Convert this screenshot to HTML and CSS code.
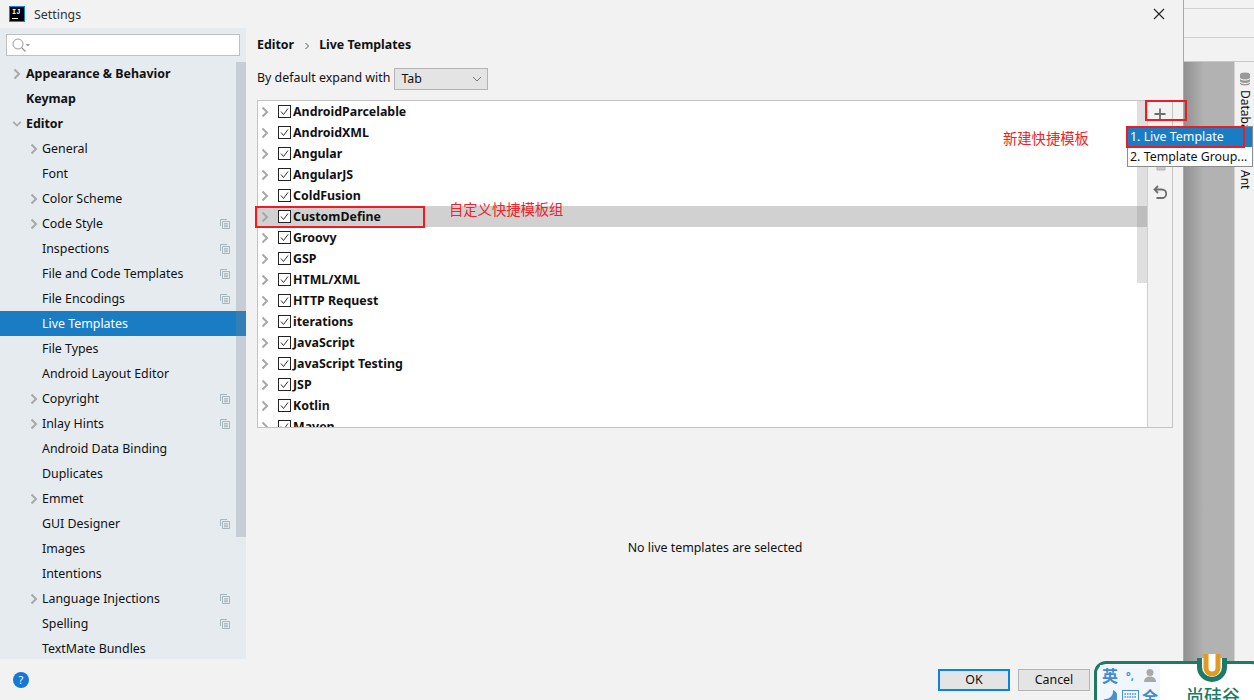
FILE: index.html
```html
<!DOCTYPE html>
<html lang="en">
<head>
<meta charset="utf-8">
<title>Settings</title>
<link rel="stylesheet" href="styles.css">
</head>
<body>
<svg class="defs" width="0" height="0" aria-hidden="true">
  <symbol id="right" viewBox="0 0 10 12"><path d="M2.5 1.500 7 6 2.500 10.500" fill="none" stroke="#a8a8a8" stroke-width="2"/></symbol>
  <symbol id="down" viewBox="0 0 12 10"><path d="M1.500 2.500 6 7l4.500-4.500" fill="none" stroke="#a8a8a8" stroke-width="2"/></symbol>
  <symbol id="copy" viewBox="0 0 10 10"><path d="M.5 7V.5H7M2.500 9.500v-7h7v7zM4 4.700h4M4 6.200h4M4 7.700h4" fill="none" stroke="#a9b5bd" stroke-width="1"/></symbol>
  <symbol id="box" viewBox="0 0 13 13"><rect x=".5" y=".5" width="12" height="12" fill="#fff" stroke="#222"/><path d="M3 6.500 5.500 9.500 10 3.500" fill="none" stroke="#333" stroke-width="1"/></symbol>
</svg>
<div class="screen">
  <div class="dialog">
    <header class="titlebar">
      <span class="app-logo"><span class="app-logo-text">IJ</span><span class="app-logo-bar"></span></span>
      <span class="title">Settings</span>
      <svg class="close" width="12" height="12" viewBox="0 0 12 12"><path d="M1 1l10 10M11 1 1 11" stroke="#222" stroke-width="1.100" fill="none"/></svg>
    </header>
    <div class="body">
      <aside class="sidebar">
        <div class="search">
          <svg width="20" height="15" viewBox="0 0 20 15"><circle cx="6" cy="6" r="5" fill="none" stroke="#9a9a9a"/><path d="M9.500 9.500l4 4" stroke="#9a9a9a" stroke-width="1.200"/><path d="M13.500 6h4.500l-2.200 2.500z" fill="#9a9a9a"/></svg>
        </div>
        <div class="tree">
          <div class="sb-thumb"></div>
          <div class="node top"><svg class="chev"><use href="#right"/></svg><b>Appearance &amp; Behavior</b></div>
          <div class="node top"><b>Keymap</b></div>
          <div class="node top"><svg class="chev"><use href="#down"/></svg><b>Editor</b></div>
          <div class="node"><svg class="chev"><use href="#right"/></svg>General</div>
          <div class="node">Font</div>
          <div class="node"><svg class="chev"><use href="#right"/></svg>Color Scheme</div>
          <div class="node"><svg class="chev"><use href="#right"/></svg>Code Style<svg class="copy"><use href="#copy"/></svg></div>
          <div class="node">Inspections<svg class="copy"><use href="#copy"/></svg></div>
          <div class="node">File and Code Templates<svg class="copy"><use href="#copy"/></svg></div>
          <div class="node">File Encodings<svg class="copy"><use href="#copy"/></svg></div>
          <div class="node selected">Live Templates</div>
          <div class="node">File Types</div>
          <div class="node">Android Layout Editor</div>
          <div class="node"><svg class="chev"><use href="#right"/></svg>Copyright<svg class="copy"><use href="#copy"/></svg></div>
          <div class="node"><svg class="chev"><use href="#right"/></svg>Inlay Hints<svg class="copy"><use href="#copy"/></svg></div>
          <div class="node">Android Data Binding</div>
          <div class="node">Duplicates</div>
          <div class="node"><svg class="chev"><use href="#right"/></svg>Emmet</div>
          <div class="node">GUI Designer<svg class="copy"><use href="#copy"/></svg></div>
          <div class="node">Images</div>
          <div class="node">Intentions</div>
          <div class="node"><svg class="chev"><use href="#right"/></svg>Language Injections<svg class="copy"><use href="#copy"/></svg></div>
          <div class="node">Spelling<svg class="copy"><use href="#copy"/></svg></div>
          <div class="node">TextMate Bundles</div>
        </div>
      </aside>
      <main class="main">
        <div class="crumbs"><b>Editor</b><svg class="crumb-sep" width="6" height="8" viewBox="0 0 6 8"><path d="M1.500 1 4.500 4 1.500 7" fill="none" stroke="#555"/></svg><b>Live Templates</b></div>
        <div class="expand">
          <span>By default expand with</span>
          <span class="combo"><span>Tab</span><svg width="10" height="6" viewBox="0 0 10 6"><path d="M1 1l4 4 4-4" fill="none" stroke="#777"/></svg></span>
        </div>
        <div class="panel">
          <div class="list">
            <div class="list-thumb"></div>
            <div class="row"><svg class="row-chev"><use href="#right"/></svg><svg class="check"><use href="#box"/></svg><b>AndroidParcelable</b></div>
            <div class="row"><svg class="row-chev"><use href="#right"/></svg><svg class="check"><use href="#box"/></svg><b>AndroidXML</b></div>
            <div class="row"><svg class="row-chev"><use href="#right"/></svg><svg class="check"><use href="#box"/></svg><b>Angular</b></div>
            <div class="row"><svg class="row-chev"><use href="#right"/></svg><svg class="check"><use href="#box"/></svg><b>AngularJS</b></div>
            <div class="row"><svg class="row-chev"><use href="#right"/></svg><svg class="check"><use href="#box"/></svg><b>ColdFusion</b></div>
            <div class="row current"><svg class="row-chev"><use href="#right"/></svg><svg class="check"><use href="#box"/></svg><b>CustomDefine</b></div>
            <div class="row"><svg class="row-chev"><use href="#right"/></svg><svg class="check"><use href="#box"/></svg><b>Groovy</b></div>
            <div class="row"><svg class="row-chev"><use href="#right"/></svg><svg class="check"><use href="#box"/></svg><b>GSP</b></div>
            <div class="row"><svg class="row-chev"><use href="#right"/></svg><svg class="check"><use href="#box"/></svg><b>HTML/XML</b></div>
            <div class="row"><svg class="row-chev"><use href="#right"/></svg><svg class="check"><use href="#box"/></svg><b>HTTP Request</b></div>
            <div class="row"><svg class="row-chev"><use href="#right"/></svg><svg class="check"><use href="#box"/></svg><b>iterations</b></div>
            <div class="row"><svg class="row-chev"><use href="#right"/></svg><svg class="check"><use href="#box"/></svg><b>JavaScript</b></div>
            <div class="row"><svg class="row-chev"><use href="#right"/></svg><svg class="check"><use href="#box"/></svg><b>JavaScript Testing</b></div>
            <div class="row"><svg class="row-chev"><use href="#right"/></svg><svg class="check"><use href="#box"/></svg><b>JSP</b></div>
            <div class="row"><svg class="row-chev"><use href="#right"/></svg><svg class="check"><use href="#box"/></svg><b>Kotlin</b></div>
            <div class="row"><svg class="row-chev"><use href="#right"/></svg><svg class="check"><use href="#box"/></svg><b>Maven</b></div>
          </div>
          <div class="tools">
            <svg class="tool" viewBox="0 0 12 12"><path d="M6 .5v11M.5 6h11" stroke="#6e6e6e" stroke-width="1.800" fill="none"/></svg>
            <svg class="tool" viewBox="0 0 12 12"><path d="M.5 6h11" stroke="#a8a8a8" stroke-width="1.600" fill="none"/></svg>
            <svg class="tool" viewBox="0 0 12 12"><path d="M3 1h8v9H3z" fill="#c8c8c8" stroke="#b4b4b4"/></svg>
            <svg class="tool tool-undo" viewBox="0 0 14 14"><path d="M5 1 1.500 4.500 5 8M2 4.500h7a3.800 3.800 0 0 1 0 8.500H3.500" fill="none" stroke="#6e6e6e" stroke-width="1.800"/></svg>
          </div>
        </div>
        <div class="empty">No live templates are selected</div>
      </main>
    </div>
    <footer class="footer">
      <span class="help">?</span>
      <span class="btn default">OK</span>
      <span class="btn">Cancel</span>
    </footer>
  </div>
  <div class="backdrop">
    <div class="back-top"><div class="back-line"></div><div class="back-line"></div></div>
    <div class="back-main">
      <div class="shade"></div>
      <div class="tool-strip">
        <svg class="db-icon" width="12" height="14" viewBox="0 0 12 14"><ellipse cx="6" cy="2.500" rx="5" ry="2" fill="#999"/><path d="M1 3v8.500c0 1 2.200 2 5 2s5-1 5-2V3" fill="#999"/><path d="M1 6.500c1 1 3 1.500 5 1.500s4-.5 5-1.500M1 10c1 1 3 1.500 5 1.500s4-.5 5-1.500" stroke="#fff" fill="none"/></svg>
        <span class="strip-text">Database</span>
        <span class="strip-text ant">Ant</span>
      </div>
    </div>
  </div>
</div>

<div class="popup">
  <div class="popup-item active">1. Live Template</div>
  <div class="popup-item">2. Template Group...</div>
</div>

<div class="mark mark-plus"></div>
<div class="mark mark-item"></div>
<div class="mark mark-row"></div>
<div class="note note-new">新建快捷模板</div>
<div class="note note-group">自定义快捷模板组</div>

<div class="ime">
  <div class="ime-keys">
    <span>英</span><span class="ime-punct">°,</span>
    <svg width="14" height="16" viewBox="0 0 14 16"><circle cx="7" cy="4.500" r="3.500" fill="#a9a9a9"/><path d="M1 14c0-4 3-5.500 6-5.500s6 1.500 6 5.500z" fill="#a9a9a9"/></svg>
    <svg width="14" height="16" viewBox="0 0 14 16"><path d="M10 1a7 7 0 1 1-9 9A8 8 0 0 0 10 1z" fill="#4a90d0"/></svg>
    <svg width="17" height="14" viewBox="0 0 17 14"><rect x=".5" y=".5" width="16" height="13" fill="none" stroke="#4a90d0"/><path d="M2.500 4h12M2.500 7h12M4 10.500h9" stroke="#4a90d0" stroke-width="1.500" stroke-dasharray="1.500 1"/></svg>
    <span>全</span>
  </div>
  <div class="brand">
    <span class="brand-name">尚硅谷</span>
  </div>
</div>
<svg class="brand-logo" width="32" height="34" viewBox="0 0 32 34">
  <path d="M3.500 6v9a12.500 12.500 0 0 0 25 0V6" fill="#fff" stroke="#1c7a66" stroke-width="5"/>
  <path d="M10 2v14a6 6 0 0 0 12 0V2" fill="#fff" stroke="#e39a20" stroke-width="5"/>
</svg>
</body>
</html>
```
FILE: styles.css
```css
* { box-sizing: border-box; }
html, body { margin: 0; height: 700px; overflow: hidden; }
body { font: 12.4px/1 "Noto Sans", "Noto Sans CJK SC", sans-serif; color: #111; background: #f2f2f2; }
.defs { position: absolute; }
b { font-weight: 700; }

.screen { display: flex; width: 1254px; height: 700px; }
.dialog { width: 1184px; height: 700px; display: flex; flex-direction: column; background: #f2f2f2; border-right: 1px solid #a8a8a8; position: relative; z-index: 1; }

.titlebar { height: 28px; flex: none; display: flex; align-items: center; padding: 0 18px 0 9px; }
.app-logo { width: 16px; height: 16px; background: #000; border: 1px solid #1c7fd8; color: #fff; display: flex; flex-direction: column; padding: 1px 2px; }
.app-logo-text { font: 700 7px/8px "Liberation Mono", monospace; }
.app-logo-bar { width: 6px; height: 1px; background: #fff; margin-top: 2px; }
.title { margin-left: 9px; color: #333; font-size: 12.4px; padding-top: 2px; }
.close { margin-left: auto; }

.body { flex: 1; display: flex; min-height: 0; }
.sidebar { width: 246px; flex: none; background: #e6ebf0; display: flex; flex-direction: column; }
.search { height: 22px; margin: 6px 6px 0; background: #fff; border: 1px solid #c0c0c0; display: flex; align-items: center; padding-left: 5px; flex: none; }
.tree { flex: 1; position: relative; overflow: hidden; margin-top: 5px; }
.sb-thumb { position: absolute; top: 1px; right: 0; width: 10px; height: 475px; background: rgba(120,130,140,.28); z-index: 2; }
.node { height: 25px; display: flex; align-items: center; padding: 2px 0 0 42px; position: relative; white-space: nowrap; }
.node.top { padding-left: 26px; }
.node.selected { background: #1a7dc4; color: #fff; }
.chev { position: absolute; left: 29px; top: 7px; width: 10px; height: 12px; }
.top .chev { left: 12px; }
.copy { position: absolute; left: 220px; top: 8px; width: 10px; height: 10px; }

.main { flex: 1; display: flex; flex-direction: column; padding: 0 10px 0 11px; min-width: 0; }
.crumbs { height: 33px; flex: none; display: flex; align-items: center; padding-top: 2px; }
.crumb-sep { margin: 0 9px 0 10px; }
.expand { flex: none; display: flex; align-items: center; gap: 4px; height: 23px; margin-top: 6px; }
.combo { width: 94px; height: 22px; background: #e4e4e4; border: 1px solid #b4b4b4; display: flex; align-items: center; justify-content: space-between; padding: 1px 5px 0 6px; }
.panel { margin-top: 10px; height: 328px; flex: none; display: flex; background: #fff; border: 1px solid #c4c4c4; }
.list { flex: 1; position: relative; overflow: hidden; min-width: 0; }
.list-thumb { position: absolute; top: 0; right: 0; width: 10px; height: 182px; background: rgba(130,130,130,.26); z-index: 2; }
.row { height: 21px; display: flex; align-items: center; padding: 2px 0 0 2px; }
.row.current { background: #d1d1d1; }
.row-chev { width: 10px; height: 12px; flex: none; margin-top: -2px; }
.check { width: 13px; height: 13px; flex: none; margin: -2px 2px 0 8px; }
.tools { width: 25px; flex: none; border-left: 1px solid #d0d0d0; background: #f2f2f2; display: flex; flex-direction: column; align-items: center; padding-top: 7px; gap: 14px; }
.tool { width: 12px; height: 12px; flex: none; }
.tool-undo { width: 14px; height: 14px; margin-top: -1px; }
.empty { flex: 1; display: flex; align-items: center; justify-content: center; padding-top: 10px; }

.footer { height: 41px; flex: none; display: flex; align-items: center; padding: 0 93px 0 13px; gap: 8px; }
.help { width: 16px; height: 16px; border-radius: 50%; background: #1577d6; color: #fff; font-size: 11px; display: flex; align-items: center; justify-content: center; margin-right: auto; }
.btn { width: 72px; height: 22px; background: #e4e4e4; border: 1px solid #b4b4b4; display: flex; align-items: center; justify-content: center; padding-top: 2px; }
.btn.default { border: 2px solid #0a84e0; }

.backdrop { flex: 1; display: flex; flex-direction: column; min-width: 0; }
.back-top { height: 62px; flex: none; background: #f2f2f2; border-bottom: 1px solid #c8c8c8; padding-top: 8px; }
.back-line { height: 29px; border-top: 1px solid #d0d0d0; }
.back-main { flex: 1; display: flex; background: #b2b2b2; }
.shade { flex: 1; background: linear-gradient(90deg, #909090, #b2b2b2 20px); }
.tool-strip { width: 20px; flex: none; background: #f2f2f2; border-left: 1px solid #d4d4d4; display: flex; flex-direction: column; align-items: center; padding-top: 10px; }
.strip-text { writing-mode: vertical-rl; font-size: 12px; margin-top: 4px; height: 70px; white-space: nowrap; }
.strip-text.ant { height: auto; margin-top: 10px; }

.popup { position: absolute; left: 1127px; top: 126px; width: 126px; height: 41px; background: #fff; border: 1px solid #8c8c8c; z-index: 3; }
.popup-item { height: 20px; display: flex; align-items: center; padding: 0 0 0 2px; white-space: nowrap; }
.popup-item.active { background: #1a7dc4; color: #fff; }

.mark { position: absolute; border: 2px solid #ea1c24; z-index: 4; }
.mark-plus { left: 1145px; top: 100px; width: 42px; height: 21px; }
.mark-item { left: 1126px; top: 126px; width: 119px; height: 22px; }
.mark-row { left: 255px; top: 206px; width: 170px; height: 22px; }
.note { position: absolute; color: #e8262c; font-size: 14.3px; z-index: 4; font-family: "Noto Sans CJK SC", sans-serif; line-height: 16px; white-space: nowrap; }
.note-new { left: 1003px; top: 130px; }
.note-group { left: 449px; top: 201px; }

.ime { position: absolute; left: 1094px; top: 661px; width: 170px; height: 60px; background: #fff; border: 3px solid #1c7a66; border-radius: 12px; z-index: 5; display: flex; padding: 1px 0 0 3px; }
.ime-keys { width: 60px; height: 43px; background: #f0f6fc; display: grid; grid-template-columns: repeat(3, 20px); grid-auto-rows: 21px; align-items: center; justify-items: center; color: #3f8ccf; font-size: 16px; font-weight: 700; }
.ime-punct { font-size: 11px; }
.brand { position: relative; flex: 1; }
.brand-logo { position: absolute; left: 1196px; top: 652px; z-index: 6; }
.brand-name { position: absolute; left: 26px; top: 22px; color: #1c7a66; font-size: 18px; font-weight: 500; white-space: nowrap; }
```
